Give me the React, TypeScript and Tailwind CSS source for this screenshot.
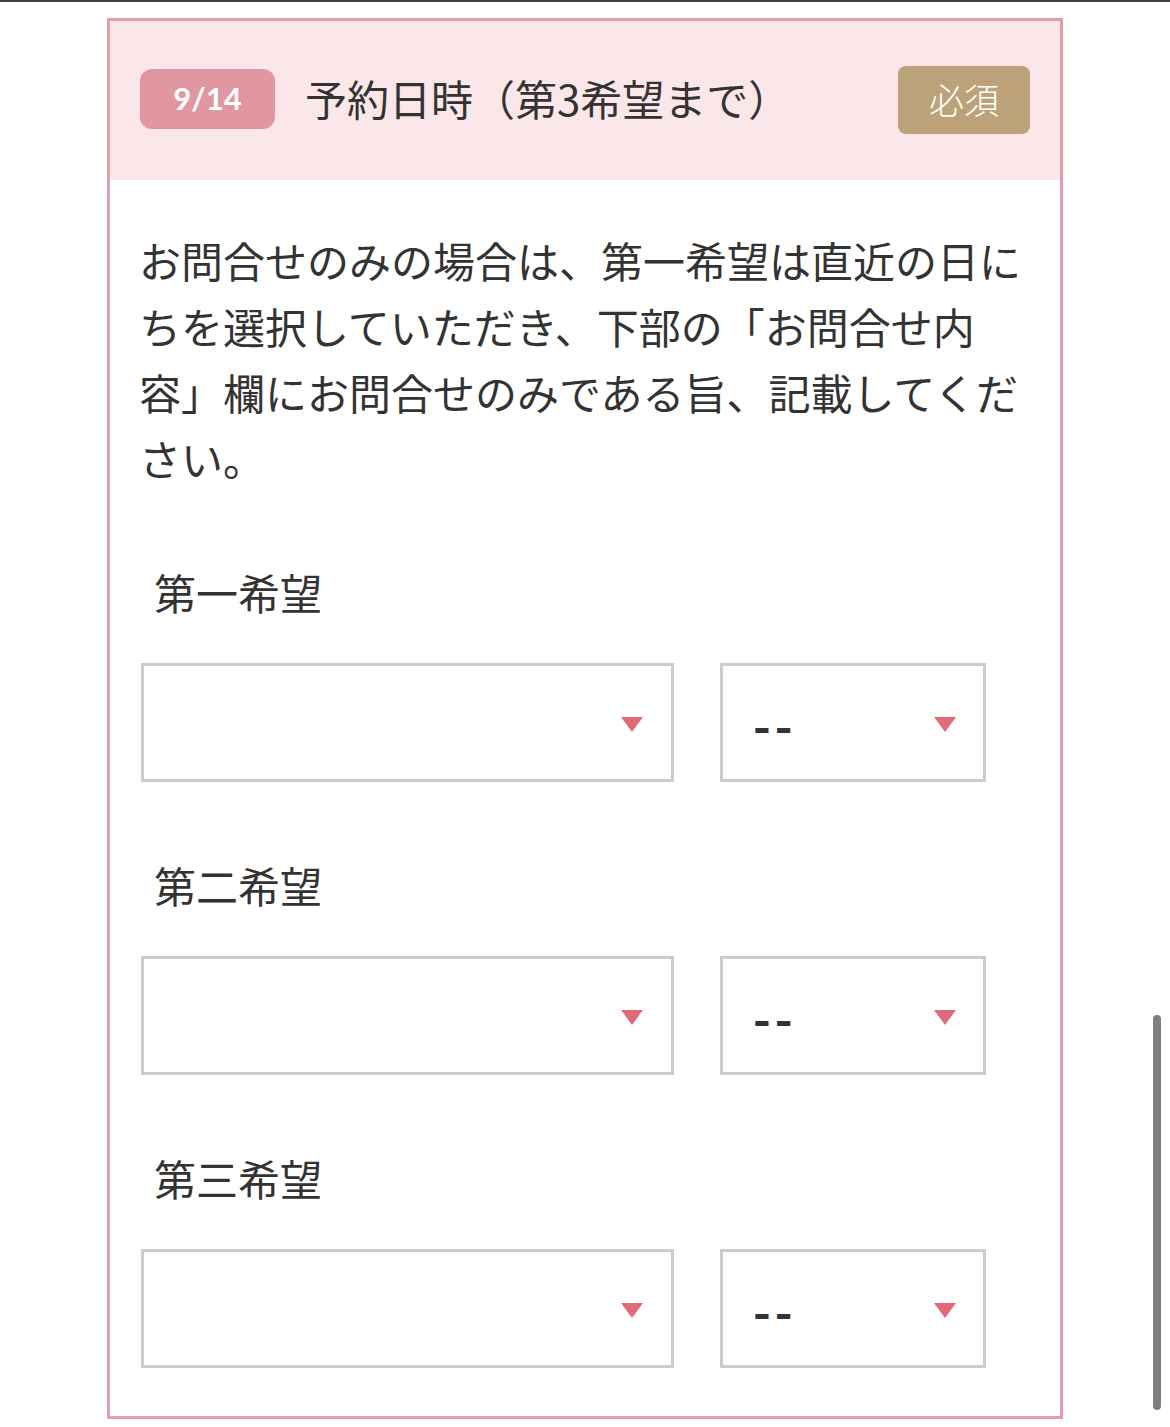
import React from "react";

const jp = { fontFamily: '"Noto Sans CJK JP", "Noto Sans", sans-serif' } as React.CSSProperties;

interface DateSelectRowProps {
	label: string;
}

const Arrow = () => (
	<svg className="mt-[3px] h-[15px] w-[22px]" viewBox="0 0 22 15">
		<polygon fill="#e06a78" points="0,0 22,0 11,15" />
	</svg>
);

const DateSelectRow = ({ label }: DateSelectRowProps) => (
	<div className="flex flex-col">
		<div className="pl-[13px] text-[42px] leading-[54px] text-[#333]">{label}</div>
		<div className="mt-[44px] flex gap-[46px]">
			<div className="flex h-[119px] w-[533px] items-center justify-end border-[3px] border-[#cccccc] bg-white pr-[28px]">
				<Arrow />
			</div>
			<div className="flex h-[119px] w-[266px] items-center justify-between border-[3px] border-[#cccccc] bg-white pl-[30px] pr-[27px]">
				<span className="mt-[1px] text-[48px] font-bold leading-none tracking-[4px] text-[#333]">--</span>
				<Arrow />
			</div>
		</div>
	</div>
);

export default function App() {
	return (
		<div className="relative min-h-[1427px] w-[1170px] overflow-hidden bg-white" style={jp}>
			<div className="h-[2px] bg-[#3b4148]" />
			<div className="pl-[107px] pt-[16px]">
				<div className="w-[956px] border-[3px] border-[#e1a0a9]">
					<div className="flex h-[159px] items-center bg-[#fbe7ea] pb-[4px] pl-[30px] pr-[30px]">
						<div
							className="flex h-[60px] w-[135px] items-center justify-center rounded-[12px] bg-[#e1979f] text-[31px] font-bold text-white"
							style={{ fontFamily: '"Lato", "Open Sans", sans-serif' }}
						>
							9/14
						</div>
						<div className="-mt-[2px] ml-[30px] text-[42px] text-[#333]">予約日時（第3希望まで）</div>
						<div className="grow" />
						<div className="mt-[2px] flex h-[68px] w-[132px] items-center justify-center rounded-[8px] bg-[#bca278] text-[35px] font-light text-white">
							必須
						</div>
					</div>
					<div className="pb-[48px] pl-[31px] pr-[28px] pt-[47px]">
						<p className="-ml-[2px] text-[42px] leading-[66px] text-[#333]">
							お問合せのみの場合は、第一希望は直近の日にちを選択していただき、下部の「お問合せ内容」欄にお問合せのみである旨、記載してください。
						</p>
						<div className="mt-[74px] flex flex-col gap-[76px]">
							<DateSelectRow label="第一希望" />
							<DateSelectRow label="第二希望" />
							<DateSelectRow label="第三希望" />
						</div>
					</div>
				</div>
			</div>
			<div className="absolute left-[1153px] top-[1015px] h-[395px] w-[8px] rounded-full bg-[#7f7f7f]" />
		</div>
	);
}
